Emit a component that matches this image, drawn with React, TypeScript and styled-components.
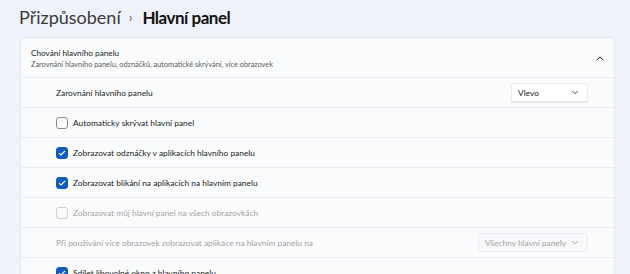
import React from 'react';
import styled, { createGlobalStyle } from 'styled-components';

const GlobalStyle = createGlobalStyle`
  html, body {
    margin: 0;
    padding: 0;
    background: #eff3f9;
    font-family: Lato, "Noto Sans", sans-serif;
    color: #1b1b1b;
    overflow: hidden;
  }
`;

const Page = styled.div`
  width: 630px;
  height: 274px;
  padding: 0 15px 0 20px;
  box-sizing: border-box;
  overflow: hidden;
`;

const Breadcrumb = styled.h1`
  display: flex;
  align-items: center;
  height: 37px;
  margin: 0 0 0 -1px;
  padding-bottom: 3px;
  box-sizing: border-box;
  font-size: 18px;
  font-weight: 400;
`;

const Crumb = styled.span<{ $current?: boolean }>`
  color: ${({ $current }) => ($current ? '#111' : '#3a3a3a')};
  font-weight: ${({ $current }) => ($current ? 700 : 400)};
  font-size: ${({ $current }) => ($current ? '17px' : '18px')};
  letter-spacing: ${({ $current }) => ($current ? '-0.5px' : '0')};
`;

const Separator = styled.span`
  margin: 0 10px 0 8px;
  font-size: 13px;
  color: #555;
`;

const Card = styled.section`
  border: 1px solid #e4e7eb;
  border-radius: 4px;
  background: #ebedf1;
  display: flex;
  flex-direction: column;
  gap: 1px;
  overflow: hidden;
`;

const Header = styled.div`
  display: flex;
  align-items: center;
  justify-content: space-between;
  height: 39px;
  padding: 2px 10px 0;
  box-sizing: border-box;
  background: #fafbfd;
`;

const HeaderText = styled.div`
  display: flex;
  flex-direction: column;
  gap: 1px;
`;

const HeaderTitle = styled.div`
  font-size: 8.2px;
  line-height: 11px;
  color: #1b1b1b;
`;

const HeaderSub = styled.div`
  font-size: 7.35px;
  line-height: 9px;
  color: #5d5d5d;
`;

const Row = styled.div<{ $disabled?: boolean }>`
  display: flex;
  align-items: center;
  justify-content: space-between;
  height: 29px;
  padding: 0 26px 0 35px;
  background: #fafbfd;
  font-size: 8.4px;
  white-space: nowrap;
  color: ${({ $disabled }) => ($disabled ? '#a3a3a3' : '#1b1b1b')};
`;

const CheckLabel = styled.label`
  display: flex;
  align-items: center;
  gap: 5px;
`;

const Box = styled.span<{ $checked?: boolean; $disabled?: boolean }>`
  width: 12px;
  height: 12px;
  box-sizing: border-box;
  border-radius: 3px;
  display: flex;
  align-items: center;
  justify-content: center;
  background: ${({ $checked }) => ($checked ? '#0f5cbc' : '#fbfbfb')};
  border: 1px solid
    ${({ $checked, $disabled }) =>
      $checked ? '#0f5cbc' : $disabled ? '#cfcfcf' : '#8d8d8d'};
`;

const Select = styled.div<{ $disabled?: boolean; $width: number }>`
  width: ${({ $width }) => $width}px;
  height: 19px;
  box-sizing: border-box;
  display: flex;
  align-items: center;
  justify-content: space-between;
  padding: 0 8px 0 6px;
  border-radius: 3px;
  background: ${({ $disabled }) => ($disabled ? '#f7f8fa' : '#ffffff')};
  border: 1px solid ${({ $disabled }) => ($disabled ? '#eceef1' : '#ebebeb')};
  box-shadow: ${({ $disabled }) =>
    $disabled ? 'none' : '0 1px 1px rgba(0,0,0,0.08)'};
  color: ${({ $disabled }) => ($disabled ? '#a3a3a3' : '#1b1b1b')};
  font-size: 8.4px;
`;

const Chevron = ({ up, color = '#555' }: { up?: boolean; color?: string }) => (
  <svg width="8" height="5" viewBox="0 0 8 5">
    <path
      d={up ? 'M1 4 L4 1 L7 4' : 'M1.5 1.2 L4 3.8 L6.5 1.2'}
      fill="none"
      stroke={color}
      strokeWidth="1"
      strokeLinecap="round"
      strokeLinejoin="round"
    />
  </svg>
);

const Tick = () => (
  <svg width="8" height="6" viewBox="0 0 8 6">
    <path d="M1 3.2 L3 5 L7 1" fill="none" stroke="#fff" strokeWidth="1.1" />
  </svg>
);

const Checkbox: React.FC<{ label: string; checked?: boolean; disabled?: boolean }> = ({
  label,
  checked,
  disabled
}) => (
  <Row $disabled={disabled}>
    <CheckLabel>
      <Box $checked={checked} $disabled={disabled}>
        {checked && <Tick />}
      </Box>
      {label}
    </CheckLabel>
  </Row>
);

const App: React.FC = () => {
  return (
    <Page>
      <GlobalStyle />
      <Breadcrumb>
        <Crumb>Přizpůsobení</Crumb>
        <Separator>›</Separator>
        <Crumb $current>Hlavní panel</Crumb>
      </Breadcrumb>
      <Card>
        <Header>
          <HeaderText>
            <HeaderTitle>Chování hlavního panelu</HeaderTitle>
            <HeaderSub>
              Zarovnání hlavního panelu, odznáčků, automatické skrývání, více obrazovek
            </HeaderSub>
          </HeaderText>
          <Chevron up color="#333" />
        </Header>
        <Row>
          <span>Zarovnání hlavního panelu</span>
          <Select $width={77}>
            <span>Vlevo</span>
            <Chevron />
          </Select>
        </Row>
        <Checkbox label="Automaticky skrývat hlavní panel" />
        <Checkbox label="Zobrazovat odznáčky v aplikacích hlavního panelu" checked />
        <Checkbox label="Zobrazovat blikání na aplikacích na hlavním panelu" checked />
        <Checkbox label="Zobrazovat můj hlavní panel na všech obrazovkách" disabled />
        <Row $disabled>
          <span>Při používání více obrazovek zobrazovat aplikace na hlavním panelu na</span>
          <Select $width={110} $disabled>
            <span>Všechny hlavní panely</span>
            <Chevron color="#aaa" />
          </Select>
        </Row>
        <Checkbox label="Sdílet libovolné okno z hlavního panelu" checked />
      </Card>
    </Page>
  );
};

export default App;
